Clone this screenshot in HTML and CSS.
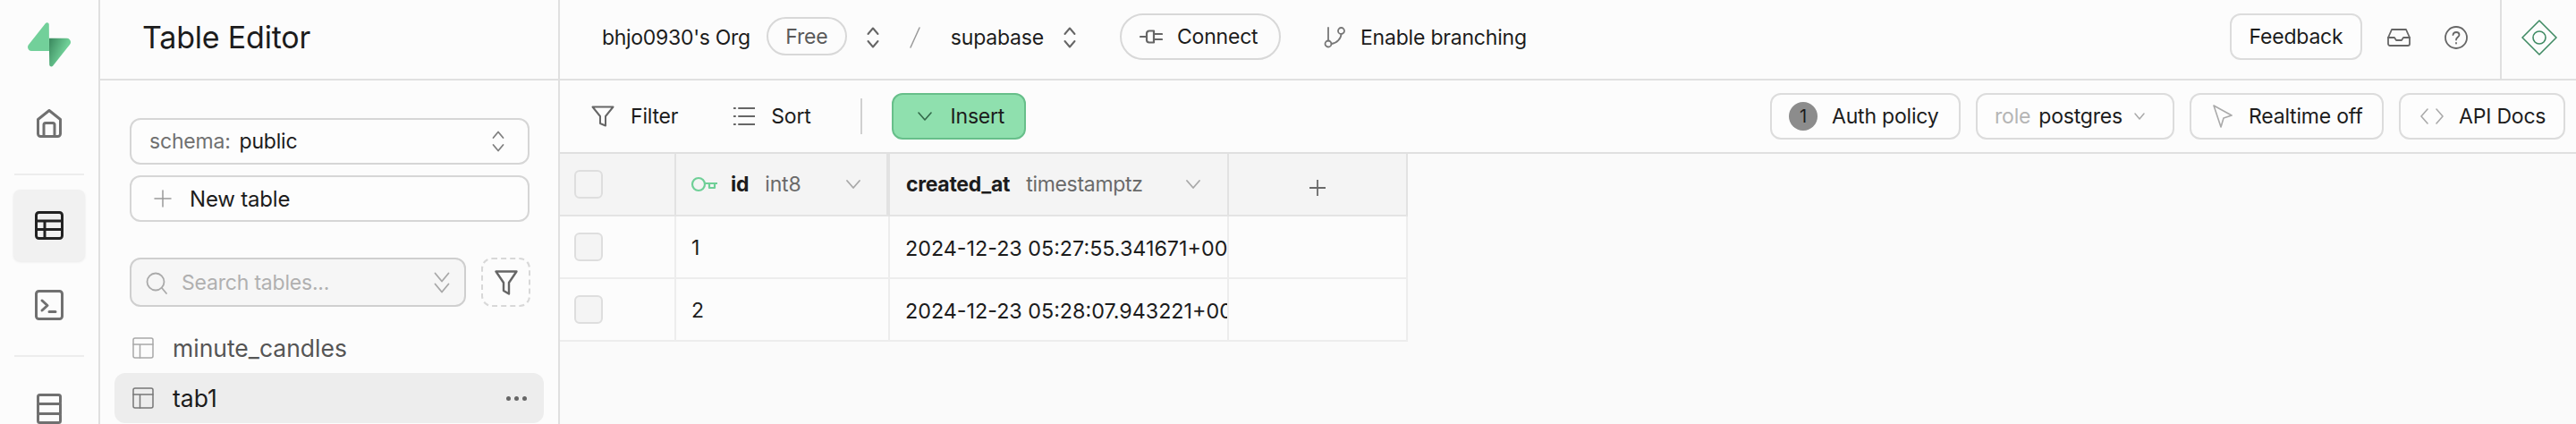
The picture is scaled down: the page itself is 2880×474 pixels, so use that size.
FILE: index.html
```html
<!DOCTYPE html>
<html lang="en">
<head>
    <meta charset="UTF-8" />
    <title>Table Editor</title>
    <link rel="stylesheet" href="styles.css">
</head>
<body>
<div class="app">

    <!-- left icon rail -->
    <nav class="rail">
        <svg class="logo" viewBox="0 0 109 113" fill="none">
            <defs>
                <linearGradient id="boltShade" x1="54" y1="55" x2="94" y2="72" gradientUnits="userSpaceOnUse">
                    <stop offset="0" stop-color="#3f8f63"/>
                    <stop offset="1" stop-color="#6fcf97"/>
                </linearGradient>
            </defs>
            <path d="M63.7 110.3C60.8 113.9 55 111.9 55 107.3L54 40.1H99.2C107.4 40.1 112 49.5 106.9 55.9L63.7 110.3Z" fill="url(#boltShade)"/>
            <path d="M45.3 2.1C48.2-1.5 54 .4 54 5L54.5 72.3H9.8C1.6 72.3-2.9 62.8 2.2 56.4L45.3 2.1Z" fill="#72d09a"/>
        </svg>
        <svg class="rail-icon home" viewBox="0 0 28 32" fill="none">
            <path d="M1.500 11.500 14 1.500l12.500 10v16a3 3 0 0 1-3 3h-19a3 3 0 0 1-3-3z"/>
            <path d="M8 30.500V17.500a2 2 0 0 1 2-2h8a2 2 0 0 1 2 2v13"/>
        </svg>
        <div class="rail-line"></div>
        <div class="rail-active">
            <svg class="rail-icon" viewBox="0 0 32 32" fill="none">
                <rect x="1.500" y="1.500" width="29" height="29" rx="3"/>
                <path d="M1.500 11h29M1.500 20.500h29M11 11v19.500"/>
            </svg>
        </div>
        <svg class="rail-icon term" viewBox="0 0 32 34" fill="none">
            <rect x="1.500" y="1.500" width="29" height="31" rx="3"/>
            <path d="m8 12 6 5.500L8 23M16 24.500h7"/>
        </svg>
        <div class="rail-line second"></div>
        <svg class="rail-icon db" viewBox="0 0 28 34" fill="none">
            <rect x="1.500" y="1.500" width="25" height="10" rx="2"/>
            <rect x="1.500" y="11.500" width="25" height="11" rx="0"/>
            <rect x="1.500" y="22.500" width="25" height="10" rx="2"/>
        </svg>
    </nav>

    <!-- table list panel -->
    <aside class="panel">
        <h1 class="panel-title">Table Editor</h1>
        <div class="panel-body">
            <div class="box schema">
                <span class="muted">schema:</span>
                <span class="schema-name">public</span>
                <svg class="updown" viewBox="0 0 14 24" fill="none"><path d="m1.500 8 5.500-6.500L12.500 8M1.500 16 7 22.500 12.500 16"/></svg>
            </div>
            <div class="box new-table">
                <svg class="plus" viewBox="0 0 20 20" fill="none"><path d="M10 1v18M1 10h18"/></svg>
                <span>New table</span>
            </div>
            <div class="search-row">
                <div class="box search">
                    <svg class="search-icon" viewBox="0 0 24 26" fill="none"><circle cx="11" cy="12" r="9.500"/><path d="m18 19 5 6"/></svg>
                    <span class="placeholder">Search tables...</span>
                    <svg class="double-down" viewBox="0 0 18 24" fill="none"><path d="m1.500 1.500 7.500 9 7.500-9M1.500 13.500l7.500 9 7.500-9"/></svg>
                </div>
                <div class="filter-box">
                    <svg class="funnel" viewBox="0 0 26 28" fill="none"><path d="M1.500 1.500h23L16 14v12.500l-6-3.500v-9z"/></svg>
                </div>
            </div>
            <div class="table-item">
                <svg class="grid-icon" viewBox="0 0 24 24" fill="none"><rect x="1" y="1" width="22" height="22" rx="2"/><path d="M1 8h22M8.500 8v15"/></svg>
                <span>minute_candles</span>
            </div>
            <div class="table-item current">
                <svg class="grid-icon" viewBox="0 0 24 24" fill="none"><rect x="1" y="1" width="22" height="22" rx="2"/><path d="M1 8h22M8.500 8v15"/></svg>
                <span>tab1</span>
                <span class="dots"><i></i><i></i><i></i></span>
            </div>
        </div>
    </aside>

    <main class="main">
        <header class="topbar">
            <span class="org">bhjo0930's Org</span>
            <span class="free-pill">Free</span>
            <svg class="updown crumb" viewBox="0 0 14 24" fill="none"><path d="m1.500 8 5.500-6.500L12.500 8M1.500 16 7 22.500 12.500 16"/></svg>
            <svg class="slash" viewBox="0 0 12 24" fill="none"><path d="M11 1 1 23"/></svg>
            <span class="project">supabase</span>
            <svg class="updown crumb" viewBox="0 0 14 24" fill="none"><path d="m1.500 8 5.500-6.500L12.500 8M1.500 16 7 22.500 12.500 16"/></svg>
            <div class="connect">
                <svg class="plug" viewBox="0 0 26 16" fill="none"><path d="M1 8h7M16 1.500h-5a3 3 0 0 0-3 3v7a3 3 0 0 0 3 3h5zM16 5h9M16 11h9"/></svg>
                <span>Connect</span>
            </div>
            <div class="branching">
                <svg class="branch" viewBox="0 0 24 24" fill="none"><circle cx="5" cy="19" r="3.500"/><circle cx="19.500" cy="4.500" r="3.500"/><path d="M5 1v14.500M19.500 8c0 5-5 10.500-11 11"/></svg>
                <span>Enable branching</span>
            </div>
            <div class="top-right">
                <div class="btn feedback">Feedback</div>
                <svg class="inbox" viewBox="0 0 26 20" fill="none"><path d="M1 10 5 1h16l4 9v7a2 2 0 0 1-2 2H3a2 2 0 0 1-2-2z"/><path d="M1 10h7l2 3h6l2-3h7"/></svg>
                <svg class="help" viewBox="0 0 26 26" fill="none"><circle cx="13" cy="13" r="12"/><path d="M9.500 10c.5-4 7-4 7 0 0 2.500-3.500 2.500-3.500 5.500"/><path d="M13 19v.5"/></svg>
                <div class="account">
                    <svg class="diamond" viewBox="0 0 40 40" fill="none"><path d="M20 1 39 20 20 39 1 20z"/><circle cx="20" cy="20" r="7"/></svg>
                </div>
            </div>
        </header>

        <div class="toolbar">
            <div class="tool">
                <svg class="tool-funnel" viewBox="0 0 26 24" fill="none"><path d="M1.500 1.500h23L16 12v10.500l-6-2.500v-8z"/></svg>
                <span>Filter</span>
            </div>
            <div class="tool sort">
                <svg class="tool-sort" viewBox="0 0 24 22" fill="none"><path d="M6 2h18M6 11h18M6 20h18M0 2h2M0 11h2M0 20h2"/></svg>
                <span>Sort</span>
            </div>
            <div class="tool-sep"></div>
            <div class="insert">
                <svg class="chev" viewBox="0 0 16 10" fill="none"><path d="m1 1 7 8 7-8"/></svg>
                <span>Insert</span>
            </div>
            <div class="tool-right">
                <div class="btn auth"><span class="badge">1</span>Auth policy</div>
                <div class="btn role">
                    <span class="role-label">role</span> <span>postgres</span>
                    <svg class="chev-small" viewBox="0 0 12 8" fill="none"><path d="m1 1 5 6 5-6"/></svg>
                </div>
                <div class="btn realtime">
                    <svg class="cursor" viewBox="0 0 22 26" fill="none"><path d="M1 1 21 12l-9 3-3 10z"/></svg>
                    <span>Realtime off</span>
                </div>
                <div class="btn api">
                    <svg class="code" viewBox="0 0 26 18" fill="none"><path d="M8 1 1 9l7 8M18 1l7 8-7 8"/></svg>
                    <span>API Docs</span>
                </div>
            </div>
        </div>

        <div class="grid">
            <div class="cell head"><span class="check"></span></div>
            <div class="cell head col-id">
                <svg class="key" viewBox="0 0 30 18" fill="none"><circle cx="9" cy="9" r="7"/><path d="M16 8h14M21 8v5h6V8"/></svg>
                <b>id</b><span class="type">int8</span>
                <svg class="chev-head" viewBox="0 0 16 10" fill="none"><path d="m1 1 7 8 7-8"/></svg>
            </div>
            <div class="cell head col-created">
                <b>created_at</b><span class="type">timestamptz</span>
                <svg class="chev-head" viewBox="0 0 16 10" fill="none"><path d="m1 1 7 8 7-8"/></svg>
            </div>
            <div class="cell head add-col">
                <svg class="add" viewBox="0 0 18 18" fill="none"><path d="M9 0v18M0 9h18"/></svg>
            </div>

            <div class="cell"><span class="check"></span></div>
            <div class="cell val">1</div>
            <div class="cell val col-created">2024-12-23 05:27:55.341671+00</div>
            <div class="cell"></div>

            <div class="cell"><span class="check"></span></div>
            <div class="cell val">2</div>
            <div class="cell val col-created">2024-12-23 05:28:07.943221+00</div>
            <div class="cell"></div>
        </div>
    </main>

</div>
</body>
</html>
```

FILE: styles.css
```css
* {
    box-sizing: border-box;
    margin: 0;
    padding: 0;
}
html, body {
    height: 100%;
    overflow: hidden;
}
body {
    font-family: Inter, sans-serif;
    font-size: 23px;
    letter-spacing: -0.2px;
    color: #1c1c1c;
    background: #fcfcfc;
}
svg {
    flex: none;
    display: block;
    stroke-linecap: round;
    stroke-linejoin: round;
}
.app {
    display: flex;
    height: 474px;
}

/* rail */
.rail {
    width: 112px;
    flex: none;
    border-right: 2px solid #e0e0e0;
    display: flex;
    flex-direction: column;
    align-items: center;
    padding-top: 25px;
    padding-right: 1px;
}
.logo {
    width: 48px;
    height: 50px;
}
.rail-icon {
    stroke: #707070;
    stroke-width: 3;
}
.home {
    width: 28px;
    height: 32px;
    margin-top: 47px;
}
.rail-line {
    width: 78px;
    height: 2px;
    background: #ededed;
    margin-top: 40px;
}
.rail-line.second {
    margin-top: 39px;
}
.rail-active {
    width: 80px;
    height: 80px;
    margin-top: 16px;
    background: #f1f1f1;
    border-radius: 8px;
    box-shadow: 0 1px 3px rgba(0, 0, 0, 0.08);
    display: flex;
    align-items: center;
    justify-content: center;
}
.rail-active svg {
    width: 32px;
    height: 32px;
    stroke: #222;
}
.term {
    width: 32px;
    height: 34px;
    margin-top: 32px;
}
.db {
    width: 28px;
    height: 34px;
    margin-top: 41px;
}

/* panel */
.panel {
    width: 514px;
    flex: none;
    border-right: 2px solid #e0e0e0;
}
.panel-title {
    height: 90px;
    border-bottom: 2px solid #e0e0e0;
    padding: 0 0 6px 47px;
    display: flex;
    align-items: center;
    font-size: 34px;
    font-weight: 400;
}
.panel-body {
    padding: 42px 0 0 33px;
}
.box {
    width: 447px;
    height: 52px;
    border: 2px solid #d6d6d6;
    border-radius: 12px;
    display: flex;
    align-items: center;
    background: #fdfdfd;
}
.schema {
    padding: 0 26px 0 20px;
}
.muted {
    color: #707070;
}
.schema-name {
    margin-left: 10px;
}
.updown {
    width: 14px;
    height: 24px;
    margin-left: auto;
    stroke: #808080;
    stroke-width: 1.800;
}
.new-table {
    margin-top: 12px;
    padding-left: 25px;
    font-size: 24px;
    letter-spacing: -0.2px;
}
.plus {
    width: 20px;
    height: 20px;
    margin-right: 20px;
    stroke: #999;
    stroke-width: 1.500;
}
.search-row {
    display: flex;
    gap: 17px;
    margin-top: 40px;
}
.search {
    width: 376px;
    height: 55px;
    padding: 0 16px;
    background: #f6f6f6;
    border-color: #cfcfcf;
}
.search-icon {
    width: 24px;
    height: 26px;
    margin-right: 16px;
    stroke: #aaa;
    stroke-width: 1.800;
}
.placeholder {
    color: #b0b0b0;
}
.double-down {
    width: 18px;
    height: 24px;
    margin-left: auto;
    stroke: #a8a8a8;
    stroke-width: 1.800;
}
.filter-box {
    width: 55px;
    height: 55px;
    border: 2px dashed #d8d8d8;
    border-radius: 12px;
    display: flex;
    align-items: center;
    justify-content: center;
}
.funnel {
    width: 26px;
    height: 28px;
    stroke: #666;
    stroke-width: 2.400;
}
.table-item {
    width: 480px;
    height: 56px;
    margin-left: -17px;
    padding: 0 20px;
    display: flex;
    align-items: center;
    color: #555;
    border-radius: 12px;
    font-size: 26.500px;
    letter-spacing: 0;
}
.search-row + .table-item {
    margin-top: 18px;
}
.table-item.current {
    background: #ededed;
    color: #1c1c1c;
}
.grid-icon {
    width: 24px;
    height: 24px;
    margin-right: 21px;
    stroke: #a8a8a8;
    stroke-width: 1.500;
}
.current .grid-icon {
    stroke: #777;
}
.dots {
    margin-left: auto;
    display: flex;
    gap: 4px;
    margin-right: -1px;
}
.dots i {
    width: 5px;
    height: 5px;
    border-radius: 50%;
    background: #666;
}

/* top bar */
.main {
    flex: 1;
    min-width: 0;
    background: #fafafa;
}
.topbar {
    height: 90px;
    border-bottom: 2px solid #e0e0e0;
    display: flex;
    align-items: center;
    padding: 0 0 0 47px;
    background: #fcfcfc;
}
.org {
    letter-spacing: -0.3px;
}
.org,
.project,
.slash,
.updown.crumb,
.branching,
.inbox,
.help {
    margin-bottom: 4px;
}
.free-pill {
    height: 43px;
    width: 90px;
    margin-left: 18px;
    margin-bottom: 7px;
    border: 2px solid #d8d8d8;
    border-radius: 22px;
    color: #5a5a5a;
    display: flex;
    align-items: center;
    justify-content: center;
}
.updown.crumb {
    margin-left: 22px;
    stroke-width: 2;
    stroke: #666;
}
.slash {
    width: 12px;
    height: 24px;
    margin-left: 34px;
    stroke: #999;
    stroke-width: 1.500;
}
.project {
    margin-left: 34px;
}
.connect {
    height: 52px;
    width: 180px;
    margin-left: 49px;
    margin-bottom: 7px;
    border: 2px solid #d8d8d8;
    border-radius: 26px;
    display: flex;
    align-items: center;
    padding-left: 20px;
    gap: 16px;
}
.plug {
    width: 26px;
    height: 16px;
    stroke: #666;
    stroke-width: 2.200;
}
.branching {
    display: flex;
    align-items: center;
    gap: 17px;
    margin-left: 48px;
}
.branch {
    width: 24px;
    height: 24px;
    stroke: #777;
    stroke-width: 1.800;
}
.top-right {
    margin-left: auto;
    display: flex;
    align-items: center;
    height: 100%;
}
.btn {
    height: 52px;
    border: 2px solid #dcdcdc;
    border-radius: 12px;
    display: flex;
    align-items: center;
    background: #fdfdfd;
}
.feedback {
    width: 148px;
    justify-content: center;
    margin-bottom: 7px;
}
.inbox {
    width: 26px;
    height: 20px;
    margin-left: 28px;
    stroke: #666;
    stroke-width: 1.800;
}
.help {
    width: 26px;
    height: 26px;
    margin-left: 38px;
    stroke: #666;
    stroke-width: 1.800;
}
.account {
    width: 85px;
    height: 100%;
    margin-left: 36px;
    border-left: 2px solid #e0e0e0;
    padding-bottom: 5px;
    display: flex;
    align-items: center;
    justify-content: center;
}
.diamond {
    width: 40px;
    height: 40px;
    stroke: #3f8a63;
    stroke-width: 1.600;
}

/* toolbar */
.toolbar {
    height: 82px;
    border-bottom: 2px solid #e0e0e0;
    display: flex;
    align-items: center;
    padding: 0 12px 0 35px;
    background: #fcfcfc;
}
.tool {
    display: flex;
    align-items: center;
    gap: 18px;
}
.tool-funnel {
    width: 26px;
    height: 24px;
    stroke: #666;
    stroke-width: 2;
}
.sort {
    margin-left: 62px;
}
.tool-sort {
    width: 24px;
    height: 22px;
    stroke: #666;
    stroke-width: 2;
}
.tool-sep {
    width: 2px;
    height: 40px;
    margin-left: 55px;
    background: #d0d0d0;
}
.insert {
    width: 150px;
    height: 52px;
    margin-left: 33px;
    background: #8fe0ae;
    border: 2px solid #67bf8a;
    border-radius: 12px;
    display: flex;
    align-items: center;
    padding-left: 27px;
    gap: 21px;
}
.chev {
    width: 16px;
    height: 10px;
    stroke: #33694a;
    stroke-width: 1.600;
}
.tool-right {
    margin-left: auto;
    display: flex;
    gap: 17px;
}
.auth {
    width: 213px;
    padding-left: 19px;
    gap: 16px;
}
.badge {
    width: 32px;
    height: 32px;
    border-radius: 50%;
    background: #8c8c8c;
    display: flex;
    align-items: center;
    justify-content: center;
    font-size: 20px;
}
.role {
    width: 222px;
    padding-left: 19px;
    gap: 9px;
}
.role-label {
    color: #b5b5b5;
}
.chev-small {
    width: 12px;
    height: 8px;
    margin-left: 4px;
    stroke: #aaa;
    stroke-width: 1.500;
}
.realtime {
    width: 217px;
    padding-left: 24px;
    gap: 18px;
}
.cursor {
    width: 22px;
    height: 26px;
    stroke: #aaa;
    stroke-width: 1.600;
}
.api {
    width: 186px;
    padding-left: 22px;
    gap: 17px;
}
.code {
    width: 26px;
    height: 18px;
    stroke: #aaa;
    stroke-width: 1.600;
}

/* data grid */
.grid {
    display: grid;
    grid-template-columns: 130px 239px 379px 200px;
    grid-template-rows: 70px 70px 70px;
    width: 948px;
    background: #fcfcfc;
}
.cell {
    display: flex;
    align-items: center;
    min-width: 0;
    overflow: hidden;
    white-space: nowrap;
    border-right: 2px solid #ededed;
    border-bottom: 2px solid #ededed;
    padding-left: 16px;
}
.cell.head {
    background: #f4f4f4;
    border-bottom-color: #e4e4e4;
    border-right-color: #e2e2e2;
}
.cell.head.col-id {
    border-right-width: 4px;
    padding-right: 29px;
}
.cell.val {
    padding-left: 17px;
    padding-top: 2px;
}
.cell.val.col-created {
    padding-left: 17px;
    padding-right: 0;
    font-size: 23.300px;
    letter-spacing: 0;
}
.cell.head.col-created {
    padding-left: 18px;
    padding-right: 30px;
}
.head b {
    font-weight: 700;
}
.head.col-created b,
.head.col-created .type {
    letter-spacing: -0.3px;
}
.check {
    width: 32px;
    height: 32px;
    border: 2px solid #dedede;
    border-radius: 6px;
    background: #f4f4f4;
}
.key {
    width: 30px;
    height: 18px;
    margin-right: 15px;
    stroke: #6fcf97;
    stroke-width: 2.200;
}
.type {
    margin-left: 18px;
    color: #6a6a6a;
}
.chev-head {
    width: 16px;
    height: 10px;
    margin-left: auto;
    stroke: #a8a8a8;
    stroke-width: 1.800;
}
.add-col {
    justify-content: center;
    padding: 8px 0 0;
}
.add {
    width: 18px;
    height: 18px;
    stroke: #6a6a6a;
    stroke-width: 1.800;
}
```
